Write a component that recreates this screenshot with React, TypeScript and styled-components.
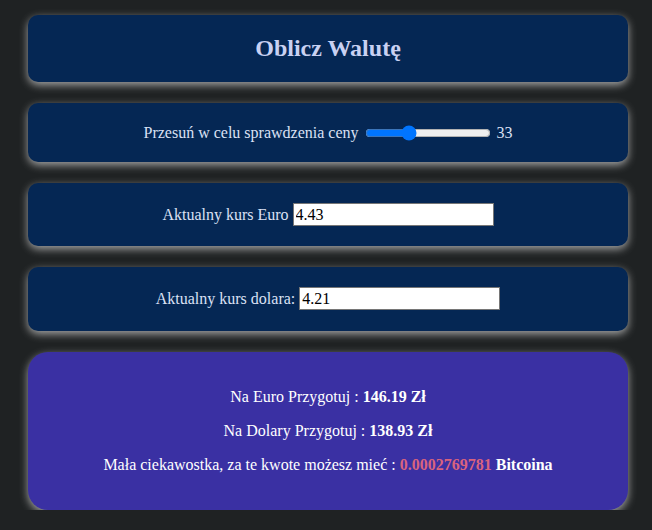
import React, { useState } from "react";
import styled, { createGlobalStyle } from "styled-components";

const GlobalStyle = createGlobalStyle`
  html, body {
    margin: 0;
    background: #1f2223;
    font-family: "Liberation Serif", "Times New Roman", serif;
  }
`;

const App = () => {
  const [amount, setAmount] = useState(33);
  const [euro, setEuro] = useState("4.43");
  const [dollar, setDollar] = useState("4.21");

  const euroTotal = (amount * parseFloat(euro || "0")).toFixed(2);
  const dollarTotal = (amount * parseFloat(dollar || "0")).toFixed(2);

  return (
    <>
      <GlobalStyle />
      <Wrapper>
        <Card $pad="19px 16px">
          <Title>Oblicz Walutę</Title>
        </Card>
        <Card $pad="20px 16px 19px">
          <Row>
            Przesuń w celu sprawdzenia ceny
            <Slider
              type="range"
              min={0}
              max={100}
              value={amount}
              onChange={(e) => setAmount(Number(e.target.value))}
            />
            {amount}
          </Row>
        </Card>
        <Card $pad="20px 16px">
          <Row>
            Aktualny kurs Euro
            <Field value={euro} onChange={(e) => setEuro(e.target.value)} />
          </Row>
        </Card>
        <Card $pad="20px 16px 21px">
          <Row>
            Aktualny kurs dolara:
            <Field value={dollar} onChange={(e) => setDollar(e.target.value)} />
          </Row>
        </Card>
        <Card $result $pad="36px 16px">
          <Line>
            Na Euro Przygotuj : <b>{euroTotal} Zł</b>
          </Line>
          <Line>
            Na Dolary Przygotuj : <b>{dollarTotal} Zł</b>
          </Line>
          <Line>
            Mała ciekawostka, za te kwote możesz mieć : <Btc>0.0002769781</Btc>{" "}
            <b>Bitcoina</b>
          </Line>
        </Card>
      </Wrapper>
    </>
  );
};

const Wrapper = styled.main`
  display: flex;
  flex-direction: column;
  gap: 21px;
  width: 600px;
  padding: 15px 0 0 28px;
`;

const Card = styled.section<{ $result?: boolean; $pad: string }>`
  background: ${(p) => (p.$result ? "#3a30a3" : "#052754")};
  border-radius: ${(p) => (p.$result ? "20px" : "10px")};
  box-shadow: 0 3px 8px rgba(210, 210, 210, 0.75);
  padding: ${(p) => p.$pad};
  text-align: center;
  color: ${(p) => (p.$result ? "#ffffff" : "#dbe1f4")};
  font-size: 16px;
  display: flex;
  flex-direction: column;
  gap: 16px;
`;

const Title = styled.h2`
  margin: 0;
  font-size: 24px;
  line-height: 29px;
  color: #c9d1f2;
`;

const Row = styled.div`
  display: flex;
  justify-content: center;
  align-items: center;
  gap: 4px;
  line-height: 20px;
`;

const Slider = styled.input`
  width: 126px;
  margin: 0 2px;
  accent-color: #0075ff;
`;

const Field = styled.input`
  width: 201px;
  height: 23px;
  box-sizing: border-box;
  border: 1px solid #767676;
  padding: 1px 2px;
  font-family: "Liberation Serif", "Times New Roman", serif;
  font-size: 16px;
  color: #000;
  background: #fff;
  outline: none;
`;

const Line = styled.p`
  margin: 0;
  line-height: 18px;
`;

const Btc = styled.b`
  color: #d9637e;
`;

export default App;
